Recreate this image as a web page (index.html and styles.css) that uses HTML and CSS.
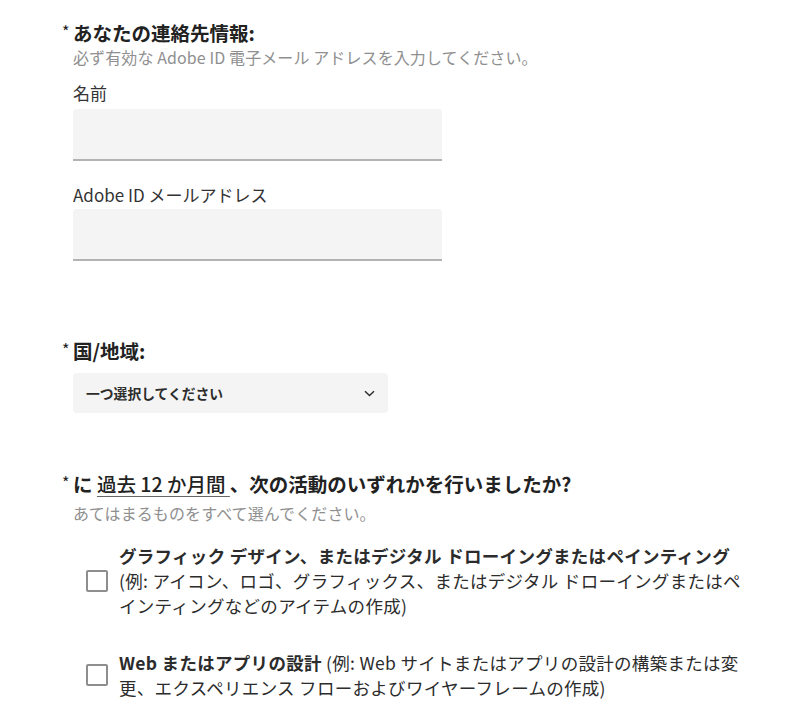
FILE: index.html
```html
<!DOCTYPE html>
<html lang="ja">
<head>
<meta charset="utf-8">
<link rel="stylesheet" href="styles.css">
</head>
<body>
<div class="page">
  <section class="group">
    <h2 class="heading"><span class="star">*</span><span>あなたの連絡先情報:</span></h2>
    <p class="hint">必ず有効な Adobe ID 電子メール アドレスを入力してください。</p>
    <label class="label label-first">名前</label>
    <div class="input"></div>
    <label class="label label-second">Adobe ID メールアドレス</label>
    <div class="input"></div>
  </section>

  <section class="group group-country">
    <h2 class="heading"><span class="star">*</span><span>国/地域:</span></h2>
    <div class="select">
      <span>一つ選択してください</span>
      <svg class="chev" width="11" height="7" viewBox="0 0 11 7"><path d="M1 1.2 L5.5 5.5 L10 1.2" fill="none" stroke="#2c2c2c" stroke-width="1.4"/></svg>
    </div>
  </section>

  <section class="group group-activity">
    <h2 class="heading"><span class="star">*</span><span>に <span class="term">過去 12 か月間 </span>、次の活動のいずれかを行いましたか?</span></h2>
    <p class="hint hint-activity">あてはまるものをすべて選んでください。</p>
    <div class="options">
      <div class="option">
        <span class="box"></span>
        <div class="otext"><b>グラフィック デザイン、またはデジタル ドローイングまたはペインティング</b><br>(例: アイコン、ロゴ、グラフィックス、またはデジタル ドローイングまたはペ<br>インティングなどのアイテムの作成)</div>
      </div>
      <div class="option">
        <span class="box"></span>
        <div class="otext"><b>Web またはアプリの設計</b> (例: Web サイトまたはアプリの設計の構築または変<br>更、エクスペリエンス フローおよびワイヤーフレームの作成)</div>
      </div>
    </div>
  </section>
</div>
</body>
</html>
```
FILE: styles.css
```css
* { box-sizing: border-box; }
html, body { margin: 0; padding: 0; background: #fff; }
body {
  font-family: "Noto Sans CJK JP", "Noto Sans", sans-serif;
  color: #2c2c2c;
  width: 800px;
  height: 714px;
  overflow: hidden;
}
.page { padding: 21px 0 0 62px; }
.group { margin: 0; }
.heading {
  display: flex;
  align-items: flex-start;
  margin: 0;
  font-size: 19.5px;
  line-height: 24px;
  font-weight: 700;
  color: #222;
}
.star {
  width: 11px;
  padding-top: 1px;
  font-size: 16px;
  line-height: 18px;
  font-weight: 400;
}
.hint {
  margin: 0;
  padding-left: 11px;
  font-size: 16px;
  line-height: 24px;
  letter-spacing: 0.1px;
  color: #8f8f8f;
}
.label {
  display: block;
  padding-left: 11px;
  font-size: 17px;
  line-height: 24px;
  color: #333;
}
.label-first { margin: 12px 0 4px; }
.label-second { margin: 22px 0 2px; }
.input {
  margin-left: 11px;
  width: 369px;
  height: 52px;
  background: #f4f4f4;
  border-radius: 4px 4px 0 0;
  border-bottom: 2px solid #b3b3b3;
}
.group-country { margin-top: 78px; }
.select {
  margin: 10px 0 0 11px;
  width: 315px;
  height: 40px;
  background: #f4f4f4;
  border-radius: 4px;
  display: flex;
  align-items: center;
  justify-content: space-between;
  padding: 0 13px 0 13px;
  font-size: 13.8px;
  font-weight: 700;
  color: #2c2c2c;
}
.chev { display: block; margin-top: 1px; }
.group-activity { margin-top: 59px; }
.term {
  font-weight: 500;
  text-decoration: underline;
  text-decoration-color: #666;
  text-decoration-thickness: 1px;
  text-underline-offset: 4px;
}
.hint-activity { margin-top: 5px; }
.options {
  margin-top: 18px;
  display: flex;
  flex-direction: column;
  gap: 32px;
}
.option {
  display: flex;
  align-items: center;
  padding-left: 24px;
  gap: 11px;
}
.box {
  flex: none;
  width: 22px;
  height: 22px;
  border: 2px solid #8e8e8e;
  border-radius: 2px;
  background: #fff;
}
.otext {
  width: 660px;
  font-size: 17.5px;
  line-height: 25px;
  letter-spacing: 0.3px;
  color: #2c2c2c;
}
.otext b { font-weight: 700; }
```
